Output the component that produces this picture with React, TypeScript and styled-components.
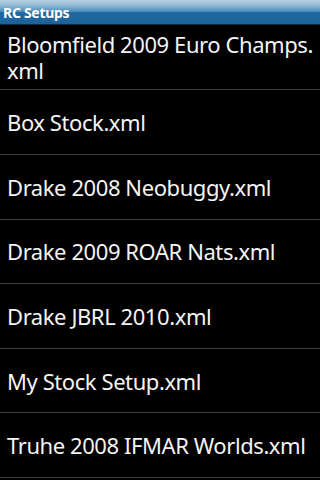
import React from "react";
import styled, { createGlobalStyle } from "styled-components";

const GlobalStyle = createGlobalStyle`
  html, body {
    margin: 0;
    padding: 0;
    background: #000;
  }
  body {
    width: 320px;
    height: 480px;
    overflow: hidden;
    font-family: "Noto Sans", "DejaVu Sans", sans-serif;
  }
`;

const Screen = styled.div`
  width: 320px;
  height: 480px;
  background: #000;
  display: flex;
  flex-direction: column;
  overflow: hidden;
`;

const TitleBar = styled.div`
  height: 24px;
  flex: 0 0 24px;
  display: flex;
  align-items: center;
  padding-left: 3px;
  background: linear-gradient(
    to bottom,
    #b4d0e2 0%,
    #8cb6d2 25%,
    #4a8cbc 48%,
    #1f6aa2 52%,
    #1c629a 100%
  );
  border-bottom: 1px solid #0c2c48;
  box-sizing: content-box;
`;

const TitleText = styled.span`
  color: #fff;
  font-family: "Noto Sans", sans-serif;
  font-weight: 700;
  font-size: 14px;
  letter-spacing: -0.3px;
  line-height: 1;
  margin-top: 1px;
  white-space: nowrap;
`;

const List = styled.ul`
  list-style: none;
  margin: 0;
  padding: 0;
  display: flex;
  flex-direction: column;
`;

const Row = styled.li<{ $tall?: boolean }>`
  box-sizing: border-box;
  height: ${(p) => (p.$tall ? "65.4px" : "64.6px")};
  flex: 0 0 auto;
  display: flex;
  align-items: center;
  padding: 0 7px;
  border-bottom: 1px solid #3c3c3c;
`;

const Label = styled.span`
  color: #f4f4f4;
  font-size: 22px;
  letter-spacing: -0.42px;
  line-height: 26px;
  font-family: "Noto Sans", sans-serif;
  white-space: nowrap;
`;

const files = [
  "Bloomfield 2009 Euro Champs.xml",
  "Box Stock.xml",
  "Drake 2008 Neobuggy.xml",
  "Drake 2009 ROAR Nats.xml",
  "Drake JBRL 2010.xml",
  "My Stock Setup.xml",
  "Truhe 2008 IFMAR Worlds.xml",
];

export default function App() {
  return (
    <>
      <GlobalStyle />
      <Screen>
        <TitleBar>
          <TitleText>RC Setups</TitleText>
        </TitleBar>
        <List>
          {files.map((f, i) => (
            <Row key={f} $tall={i === 0}>
              <Label>
                {i === 0 ? (
                  <>
                    Bloomfield 2009 Euro Champs.
                    <br />
                    xml
                  </>
                ) : (
                  f
                )}
              </Label>
            </Row>
          ))}
        </List>
      </Screen>
    </>
  );
}
